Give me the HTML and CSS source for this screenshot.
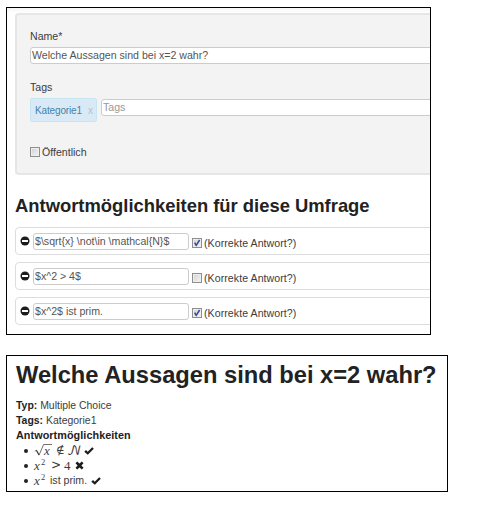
FILE: index.html
```html
<!DOCTYPE html>
<html lang="de">
<head>
<meta charset="utf-8">
<title>Umfrage</title>
<link rel="stylesheet" href="styles.css">
</head>
<body>
<svg class="defs" width="0" height="0">
  <symbol id="minus" viewBox="0 0 10 10"><circle cx="5" cy="5" r="4.5" fill="#1c1c1c"/><rect x="2" y="4" width="6" height="2" rx=".3" fill="#fff"/></symbol>
  <symbol id="tick" viewBox="0 0 10 8"><path d="M.3 4.7 2 3.1 3.7 4.7 8.2.3 9.8 1.8 3.8 7.8Z" fill="#1c1c1c"/></symbol>
  <symbol id="cross" viewBox="0 0 9 9"><path d="M.5 2.2 2.2.5 4.5 2.6 6.8.5 8.5 2.2 6.4 4.5 8.5 6.8 6.8 8.5 4.5 6.4 2.2 8.5.5 6.8 2.6 4.5Z" fill="#1c1c1c"/></symbol>
  <symbol id="check" viewBox="0 0 8 8"><path d="M1.6 3.7 3.2 6.4 6.6 1" fill="none" stroke="#39459a" stroke-width="1.5"/></symbol>
</svg>
<main class="page">
  <section class="frame editor">
    <div class="well">
      <div class="label">Name*</div>
      <div class="field wide">Welche Aussagen sind bei x=2 wahr?</div>
      <div class="label tags-label">Tags</div>
      <div class="tag-row">
        <span class="tag">Kategorie1<span class="close">x</span></span>
        <div class="field wide placeholder">Tags</div>
      </div>
      <div class="public"><span class="box"></span><span>Öffentlich</span></div>
    </div>
    <h2>Antwortmöglichkeiten für diese Umfrage</h2>
    <div class="answers">
      <div class="answer"><svg class="minus"><use href="#minus"/></svg><div class="field">$\sqrt{x} \not\in \mathcal{N}$</div><span class="box"><svg><use href="#check"/></svg></span><span class="hint">(Korrekte Antwort?)</span></div>
      <div class="answer"><svg class="minus"><use href="#minus"/></svg><div class="field">$x^2 &gt; 4$</div><span class="box"></span><span class="hint">(Korrekte Antwort?)</span></div>
      <div class="answer"><svg class="minus"><use href="#minus"/></svg><div class="field">$x^2$ ist prim.</div><span class="box"><svg><use href="#check"/></svg></span><span class="hint">(Korrekte Antwort?)</span></div>
    </div>
  </section>
  <section class="frame preview">
    <h1>Welche Aussagen sind bei x=2 wahr?</h1>
    <div class="line"><b>Typ:</b> Multiple Choice</div>
    <div class="line"><b>Tags:</b> Kategorie1</div>
    <div class="line"><b class="caption">Antwortmöglichkeiten</b></div>
    <ul>
      <li><span class="root"><svg class="radical" viewBox="0 0 18 13"><path d="M.8 8.2 2.4 7.2" fill="none" stroke="#333" stroke-width=".7"/><path d="M2.4 7.2 5 12" fill="none" stroke="#333" stroke-width="1.2"/><path d="M5 12.2 9.6 1.5H18" fill="none" stroke="#333" stroke-width=".7"/></svg><i>x</i></span><span class="notin">∉</span><span class="script">𝒩</span><svg class="tick"><use href="#tick"/></svg></li>
      <li><i>x</i><sup>2</sup><span class="gt">&gt;</span><span class="four">4</span><svg class="cross"><use href="#cross"/></svg></li>
      <li><i>x</i><sup>2</sup><span class="prim">ist prim.</span><svg class="tick"><use href="#tick"/></svg></li>
    </ul>
  </section>
</main>
</body>
</html>
```
FILE: styles.css
```css
* { box-sizing: border-box; }
body { margin: 0; background: #fff; color: #3c3c3c; font: 10.6px/15px "Liberation Sans", Arial, sans-serif; white-space: nowrap; }
.defs { display: block; height: 0; }
.page { padding: 7px 0 0 6px; }
.frame { border: 1px solid #000; overflow: hidden; }
.editor { width: 425px; height: 328px; padding: 5px 0 0 8px; background: linear-gradient(#f5f5f5, #fff 5px); }
.well { width: 440px; height: 162px; padding: 13px 0 0 13px; border: 2px solid #e6e6e6; border-right: 0; border-radius: 4px; background: #f3f3f3; }
.label { height: 19px; line-height: 16px; }
.field { width: 157px; height: 17px; padding-left: 1px; border: 1px solid #ccc; border-radius: 3px; background: #fff; color: #555; line-height: 15px; }
.wide { width: 430px; }
.tags-label { margin-top: 15px; }
.tag-row { display: flex; gap: 4px; align-items: flex-start; }
.tag { flex: none; width: 67px; height: 24px; padding-left: 4px; border: 1px solid #c5e6f0; border-radius: 2px; background: #d9eaf6; color: #4682aa; line-height: 24px; font-size: 10px; letter-spacing: -.15px; }
.close { margin-left: 6px; color: #b4c1c9; }
.tag-row .field { flex: none; margin-top: 1px; }
.placeholder { color: #999; }
.public { display: flex; align-items: center; gap: 2px; margin-top: 22px; height: 16px; }
.box { flex: none; display: block; width: 10px; height: 10px; border: 1px solid #8e8f8f; background: linear-gradient(135deg, #cfd1d4, #f5f5f5); box-shadow: inset 0 0 0 1px #eee; }
.box svg { display: block; width: 8px; height: 8px; }
h2 { margin: 19px 0 0; height: 33px; font-size: 18.4px; line-height: 24px; color: #222; }
.answers { display: grid; gap: 7px; }
.answer { display: flex; width: 440px; height: 28px; padding: 5px 0 0 4px; border: 1px solid #ddd; border-radius: 4px; }
.answer .field { width: 156px; }
.minus { flex: none; width: 10px; height: 10px; margin: 3px 3px 0 0; }
.answer .box { margin: 5px 2px 0 3px; }
.hint { line-height: 21px; letter-spacing: .06px; }
.preview { width: 442px; height: 137px; margin-top: 20px; padding: 5px 0 0 9px; }
h1 { margin: 0; height: 37px; font-size: 23.7px; line-height: 29px; color: #222; }
.line { height: 15px; font-size: 10.45px; }
.line b { color: #222; }
.line .caption { font-size: 10.8px; letter-spacing: .07px; }
ul { margin: 0; padding: 0; list-style: none; }
li { display: flex; align-items: center; height: 15px; padding-left: 18px; position: relative; }
li::before { content: ""; position: absolute; left: 8px; top: 6px; width: 4px; height: 4px; border-radius: 50%; background: #222; }
li i { font: italic 13px/15px "Liberation Serif", serif; width: 7px; }
sup { align-self: flex-start; width: 6px; font: 8.5px/9px "Liberation Serif", serif; }
.root { position: relative; width: 19px; height: 15px; padding-left: 10px; }
.radical { position: absolute; left: 0; top: 0; width: 18px; height: 13px; }
.notin { margin-left: 3px; width: 11px; font: 12px/15px "DejaVu Serif", serif; }
.script { width: 17px; padding-top: 1px; font: 13px/15px "DejaVu Math TeX Gyre", "DejaVu Serif", serif; }
.tick { width: 10px; height: 8px; }
.cross { width: 9px; height: 9px; }
.gt { margin-left: 4px; width: 13px; font: 12px/15px "DejaVu Serif", serif; }
.four { width: 11px; font: 13px/15px "Liberation Serif", serif; }
.prim { margin-left: 3px; width: 41px; }
```
